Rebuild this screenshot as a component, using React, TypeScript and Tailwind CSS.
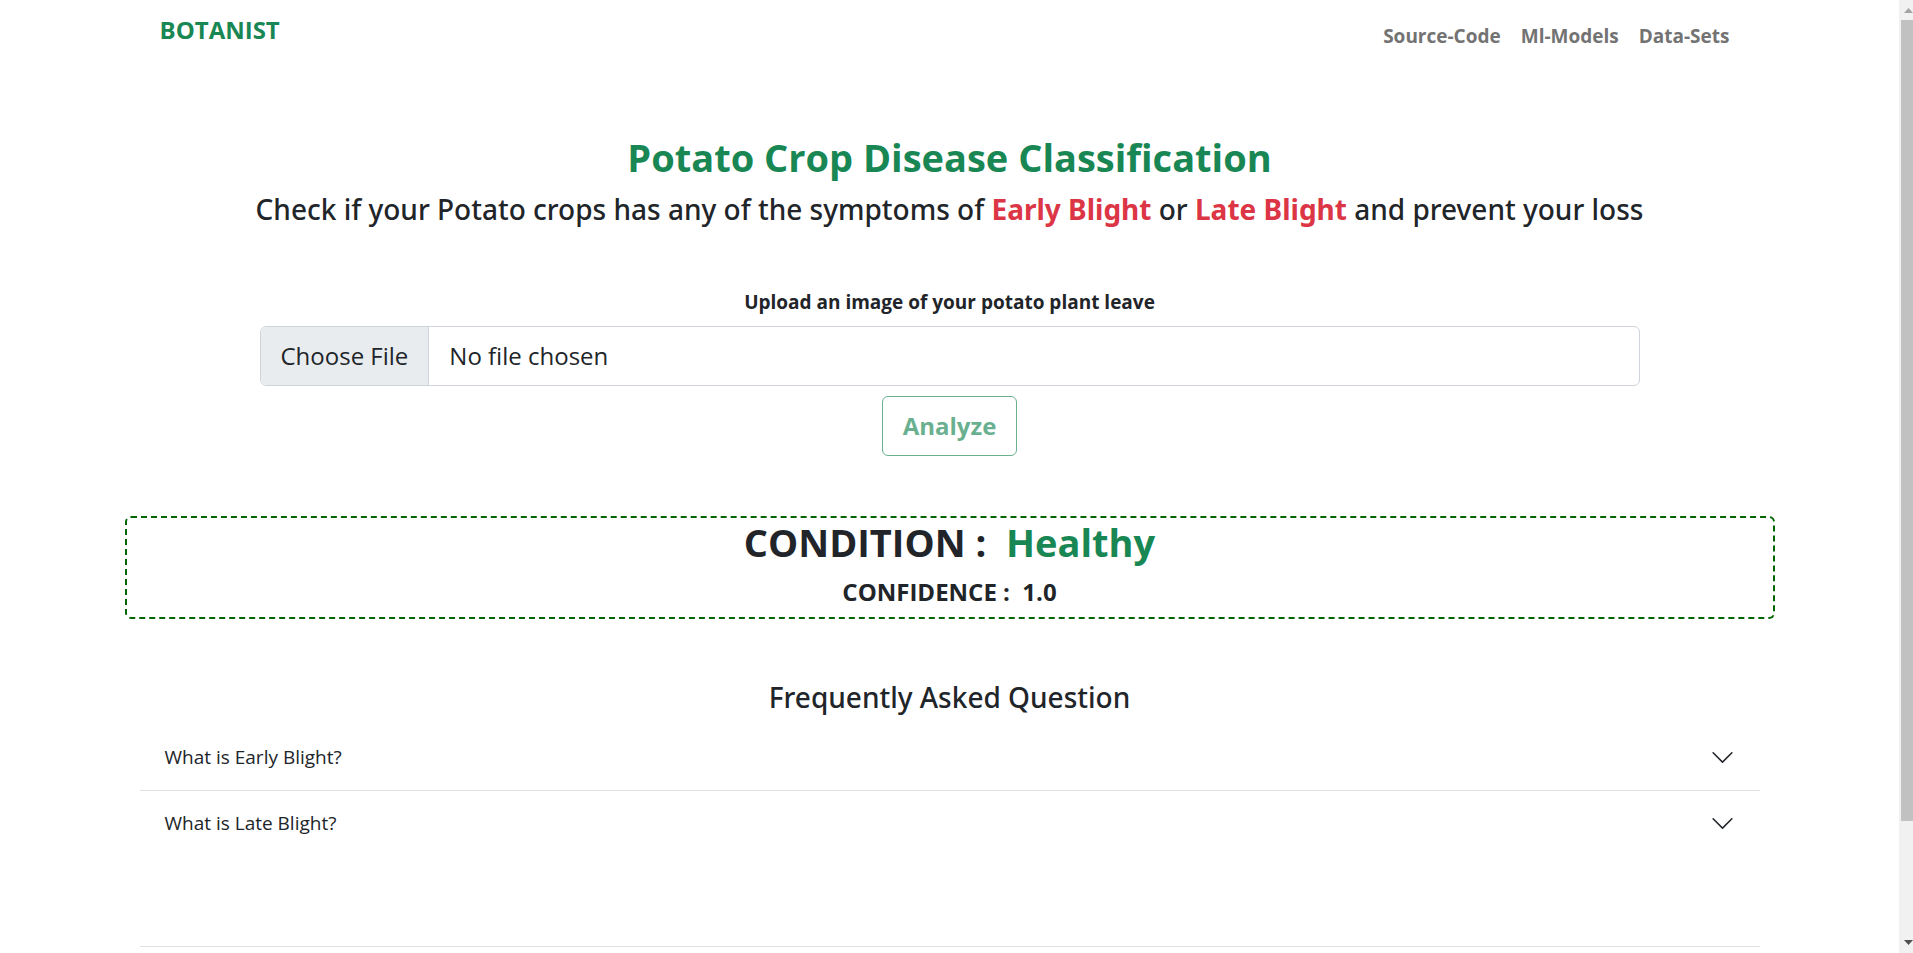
import { useState } from "react";

const links = ["Source-Code", "Ml-Models", "Data-Sets"];

const questions = [
  {
    title: "What is Early Blight?",
    answer: "Early blight is a fungal disease that leaves dark, ringed spots on older potato leaves.",
  },
  {
    title: "What is Late Blight?",
    answer: "Late blight is a fast-spreading disease that rots the leaves and tubers of potato plants.",
  },
];

function Chevron({ open }: { open: boolean }) {
  return (
    <svg
      viewBox="0 0 16 16"
      fill="#212529"
      aria-hidden="true"
      className={open ? "h-[25px] w-[25px] rotate-180" : "h-[25px] w-[25px]"}
    >
      <path
        fillRule="evenodd"
        d="M1.646 4.646a.5.5 0 0 1 .708 0L8 10.293l5.646-5.647a.5.5 0 0 1 .708.708l-6 6a.5.5 0 0 1-.708 0l-6-6a.5.5 0 0 1 0-.708z"
      />
    </svg>
  );
}

function Navbar() {
  return (
    <nav className="mx-auto flex w-full max-w-[1650px] items-start justify-between px-[35px] pt-[12px]">
      <a href="#" className="text-[24px] leading-[36px] font-bold text-[#198754]">
        BOTANIST
      </a>
      <ul className="flex gap-5 pt-[9px] pr-[10px]">
        {links.map((link) => (
          <li key={link}>
            <a href="#" className="text-[19px] leading-[30px] font-bold text-[#737373]">
              {link}
            </a>
          </li>
        ))}
      </ul>
    </nav>
  );
}

function Faq() {
  const [open, setOpen] = useState<number | null>(null);
  return (
    <section className="px-[15px]">
      <h3 className="mb-[10px] text-center font-['Noto_Sans',sans-serif] text-[28px] leading-[36px] font-medium">
        Frequently Asked Question
      </h3>
      {questions.map((question, index) => (
        <div key={question.title} className={index === 0 ? "border-b border-[#dee2e6]" : ""}>
          <button
            type="button"
            aria-expanded={open === index}
            onClick={() => setOpen(open === index ? null : index)}
            className="flex h-[65px] w-full items-center justify-between px-[25px] text-left text-[19px]"
          >
            {question.title}
            <Chevron open={open === index} />
          </button>
          {open === index && <p className="px-[25px] pb-5 text-[19px]">{question.answer}</p>}
        </div>
      ))}
    </section>
  );
}

function ScrollRail() {
  return (
    <div
      aria-hidden="true"
      className="sticky top-0 flex h-screen w-[14px] shrink-0 flex-col items-end overflow-hidden bg-[#f1f1f1]"
    >
      <svg viewBox="0 0 9 20" className="h-[20px] w-[9px] shrink-0">
        <path d="M0 13 4.5 8 9 13z" fill="#a3a3a3" />
      </svg>
      <div className="w-[12px] grow-[801] bg-[#c1c1c1]" />
      <div className="grow-[112]" />
      <svg viewBox="0 0 9 20" className="h-[20px] w-[9px] shrink-0">
        <path d="M0 7 4.5 12 9 7z" fill="#505050" />
      </svg>
    </div>
  );
}

export default function App() {
  return (
    <div className="flex min-h-screen bg-white font-['Open_Sans','Noto_Sans',sans-serif] text-[#212529]">
      <div className="min-w-0 flex-1">
        <Navbar />
        <main className="mx-auto w-full max-w-[1650px] pt-[82px]">
          <header className="text-center">
            <h1 className="mb-[10px] text-[38px] leading-[48px] font-bold text-[#198754]">
              Potato Crop Disease Classification
            </h1>
            <h2 className="font-['Noto_Sans',sans-serif] text-[28px] leading-[36px] font-medium">
              Check if your Potato crops has any of the symptoms of{" "}
              <span className="font-bold text-[#dc3545]">Early Blight</span> or{" "}
              <span className="font-bold text-[#dc3545]">Late Blight</span> and prevent your loss
            </h2>
          </header>

          <form
            className="mx-auto flex max-w-[1380px] flex-col items-center pt-[63px]"
            onSubmit={(event) => event.preventDefault()}
          >
            <label htmlFor="leaf-image" className="mb-[12px] text-[19px] leading-[24px] font-bold">
              Upload an image of your potato plant leave
            </label>
            <input
              id="leaf-image"
              type="file"
              accept="image/*"
              className="mb-[10px] h-[60px] w-full rounded-[6px] border border-[#ced4da] text-[24px] file:mr-5 file:h-[58px] file:border-0 file:border-r file:border-solid file:border-[#ced4da] file:bg-[#e9ecef] file:px-5 file:text-[24px] file:text-[#212529]"
            />
            <button
              type="submit"
              disabled
              className="h-[60px] rounded-[6px] border border-[#198754] px-5 text-[24px] font-bold text-[#198754] opacity-65"
            >
              Analyze
            </button>
          </form>

          <section className="my-[60px] rounded-[6px] border-2 border-dashed border-[#006400] text-center">
            <h2 className="mb-[10px] text-[38px] leading-[48px] font-bold">
              CONDITION :&nbsp; <span className="text-[#198754]">Healthy</span>
            </h2>
            <h4 className="mb-[9px] text-[24px] leading-[32px] font-bold">CONFIDENCE :&nbsp; 1.0</h4>
          </section>

          <Faq />
          <footer className="mx-[15px] mt-[90px] border-t border-[#dee2e6]" />
        </main>
      </div>
      <ScrollRail />
    </div>
  );
}
